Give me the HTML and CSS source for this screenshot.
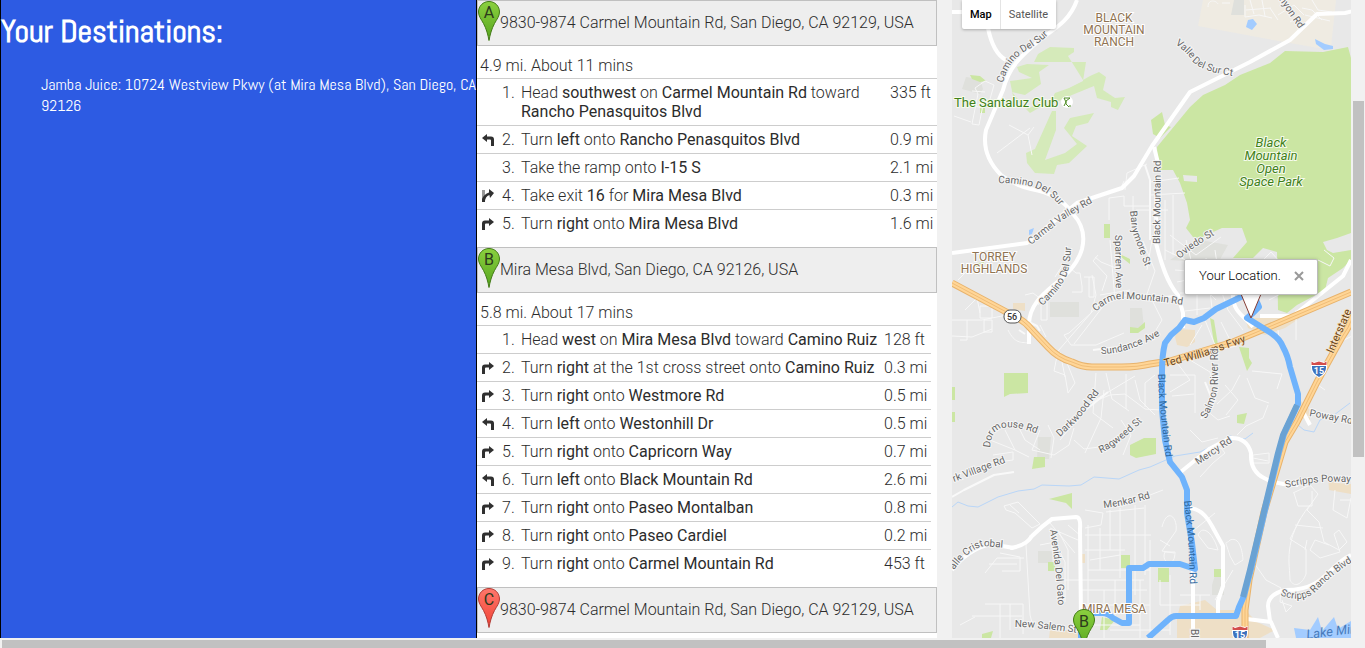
FILE: index.html
```html
<!DOCTYPE html>
<html lang="en">
<head>
<meta charset="utf-8">
<title>Your Destinations</title>
<link rel="stylesheet" href="styles.css">
</head>
<body>
<svg class="defs" aria-hidden="true">
  <defs>
    <linearGradient id="green" x2="0" y2="1"><stop offset="0" stop-color="#8bd03f"/><stop offset="1" stop-color="#56a51f"/></linearGradient>
    <linearGradient id="red" x2="0" y2="1"><stop offset="0" stop-color="#ff776b"/><stop offset="1" stop-color="#f04335"/></linearGradient>
    <symbol id="pin" viewBox="0 0 22 40"><path d="M11 .5C5 .5.5 5.200.5 11c0 4 2.500 7 5 11.500C8.500 28 10 34 11 39.500 12 34 13.500 28 16.500 22.500 19 18 21.500 15 21.500 11 21.500 5.200 17 .5 11 .5z"/></symbol>
    <symbol id="right" viewBox="0 0 14 14"><path fill="#303030" d="M1 13V6.500Q1 3.500 4 3.500H8V1l5 4-5 4V6.500H5Q4 6.500 4 7.500V13z"/></symbol>
    <symbol id="left" viewBox="0 0 14 14"><path fill="#303030" d="M13 13V6.500Q13 3.500 10 3.500H6V1L1 5l5 4V6.500h3q1 0 1 1V13z"/></symbol>
    <symbol id="ramp" viewBox="0 0 14 14"><path fill="#999" d="M1 1h3v12H1z"/><path fill="#303030" d="M1 13V10Q3 5 8 3.500V0l5 4-4 5-.6-3Q4 7.500 4 13z"/></symbol>
    <symbol id="shield" viewBox="0 0 18 18"><path fill="#fff" d="M1 1l3 1 5-1 5 1 3-1v7q0 6-8 10Q1 14 1 8z"/><path fill="#3c73be" d="M2 6h14v2q0 5-7 9-7-4-7-9z"/><path fill="#d34d4b" d="M1.500 1.500L4 3l5-1.500L14 3l2.500-1.500V5h-15z"/></symbol>
  </defs>
</svg>
<div class="page">
  <main class="columns">
    <section class="destinations">
      <h1>Your Destinations:</h1>
      <ul><li>Jamba Juice: 10724 Westview Pkwy (at Mira Mesa Blvd), San Diego, CA 92126</li></ul>
    </section>

    <section class="directions">
      <div class="place"><svg class="pin green" viewBox="0 0 22 40"><use href="#pin"/><text x="11" y="17">A</text></svg><span>9830-9874 Carmel Mountain Rd, San Diego, CA 92129, USA</span></div>
      <p class="summary">4.9 mi. About 11 mins</p>
      <table class="steps">
        <tr><td class="turn"></td><td class="num">1.</td><td>Head <b>southwest</b> on <b>Carmel Mountain Rd</b> toward <b>Rancho Penasquitos Blvd</b></td><td class="dist">335 ft</td></tr>
        <tr><td class="turn"><svg><use href="#left"/></svg></td><td class="num">2.</td><td>Turn <b>left</b> onto <b>Rancho Penasquitos Blvd</b></td><td class="dist">0.9 mi</td></tr>
        <tr><td class="turn"></td><td class="num">3.</td><td>Take the ramp onto <b>I-15 S</b></td><td class="dist">2.1 mi</td></tr>
        <tr><td class="turn"><svg><use href="#ramp"/></svg></td><td class="num">4.</td><td>Take exit <b>16</b> for <b>Mira Mesa Blvd</b></td><td class="dist">0.3 mi</td></tr>
        <tr><td class="turn"><svg><use href="#right"/></svg></td><td class="num">5.</td><td>Turn <b>right</b> onto <b>Mira Mesa Blvd</b></td><td class="dist">1.6 mi</td></tr>
      </table>
      <div class="place"><svg class="pin green" viewBox="0 0 22 40"><use href="#pin"/><text x="11" y="17">B</text></svg><span>Mira Mesa Blvd, San Diego, CA 92126, USA</span></div>
      <p class="summary">5.8 mi. About 17 mins</p>
      <table class="steps inset">
        <tr><td class="turn"></td><td class="num">1.</td><td>Head <b>west</b> on <b>Mira Mesa Blvd</b> toward <b>Camino Ruiz</b></td><td class="dist">128 ft</td></tr>
        <tr><td class="turn"><svg><use href="#right"/></svg></td><td class="num">2.</td><td>Turn <b>right</b> at the 1st cross street onto <b>Camino Ruiz</b></td><td class="dist">0.3 mi</td></tr>
        <tr><td class="turn"><svg><use href="#right"/></svg></td><td class="num">3.</td><td>Turn <b>right</b> onto <b>Westmore Rd</b></td><td class="dist">0.5 mi</td></tr>
        <tr><td class="turn"><svg><use href="#left"/></svg></td><td class="num">4.</td><td>Turn <b>left</b> onto <b>Westonhill Dr</b></td><td class="dist">0.5 mi</td></tr>
        <tr><td class="turn"><svg><use href="#right"/></svg></td><td class="num">5.</td><td>Turn <b>right</b> onto <b>Capricorn Way</b></td><td class="dist">0.7 mi</td></tr>
        <tr><td class="turn"><svg><use href="#left"/></svg></td><td class="num">6.</td><td>Turn <b>left</b> onto <b>Black Mountain Rd</b></td><td class="dist">2.6 mi</td></tr>
        <tr><td class="turn"><svg><use href="#right"/></svg></td><td class="num">7.</td><td>Turn <b>right</b> onto <b>Paseo Montalban</b></td><td class="dist">0.8 mi</td></tr>
        <tr><td class="turn"><svg><use href="#right"/></svg></td><td class="num">8.</td><td>Turn <b>right</b> onto <b>Paseo Cardiel</b></td><td class="dist">0.2 mi</td></tr>
        <tr><td class="turn"><svg><use href="#right"/></svg></td><td class="num">9.</td><td>Turn <b>right</b> onto <b>Carmel Mountain Rd</b></td><td class="dist">453 ft</td></tr>
      </table>
      <div class="place"><svg class="pin red" viewBox="0 0 22 40"><use href="#pin"/><text x="11" y="17">C</text></svg><span>9830-9874 Carmel Mountain Rd, San Diego, CA 92129, USA</span></div>
    </section>

    <section class="map" aria-label="Route map">
      <svg class="canvas" viewBox="952 0 399 638" preserveAspectRatio="xMidYMin slice">
        <!-- parks, water and built-up areas -->
        <g class="area">
          <path class="urban" d="M1203 0h133l-5 47-13 1-45-8-75-14z"/>
          <path class="grey" d="M1234 0h10v15h-13zM1050 302h29v15h-29zM1130 308h12l2 20-14 5zM1038 437h13l-2 22h-12zM1038 551h14v12h-14zM966 77l14 2 3 10-3 5-18-5zM1215 575l9-5v25h-12v-10zM1170 260l30-20 28 5-10 18z"/>
          <path class="shops" d="M1175 337l3-8 17 1v12l-8 5-10-2zM1245 318h55l-15 10-20 7-17-7zM1013 303h12v8l-12-2zM1180 606l25-6 12 10v28h-40v-20zM1217 610h28l12 12 18 8-15 8h-43zM1050 630h35v8h-36zM1328 475l8 8 15 1v10l-22-4zM1300 400l10 10v12l-10-5zM1079 554h6v9h-6z"/>
          <path class="park" d="M1157 147L1190 107 1203 95 1225 85 1240 75 1270 63 1285 51 1323 52 1348 47 1351 58V233L1337 238 1323 242 1327 250 1333 253 1351 250V260L1343 268 1328 278 1325 290 1297 305 1287 313 1278 310 1277 252 1263 248 1253 258H1233L1247 242 1242 228 1222 228 1200 238 1193 237 1186 228 1190 220 1187 203 1180 183 1173 170H1158z"/>
          <path class="park" d="M1151 120l11-8 3 13 6 2-11 11-7-4zM970 75l10 1 6 5-6 1-8-3zM980 108h5v5h-5zM1104 224h6v14h-6zM1120 254l10 5v5l-9-7zM1130 327l8 1 7-6v6l-7 5h-8zM1004 373h24v20l-18 1-6 3zM952 387h3v13h-3zM952 412h3v10h-3zM1034 457h11v10l-13 2zM1049 499l23-6v16l-6-6zM1130 445l14-7h12v16l-20 4-6-3zM1121 555h9v13h-9zM1048 562h7v9h-7zM1102 617l13 3-8 10h-7zM982 634l11-3-2 7h-9zM1158 568h11v14h-11zM1214 569h10v8h-10zM1239 347l10 1v10l3 5-5 8zM1237 415l10-2-3 11-7-1zM975 264l9-2-1 8h-7zM1210 318l4 2 4 25-4-2z"/>
          <path class="golf" d="M1034 62l4-8 12-7 24 1v4l-6 4 15 24 7-4 9-4 7 5-3 13 12 8 10-1-7 13-7-3v-5l-14-4-3-12-22 9-15 7-13 3-14 8-17-17-3-15 22-3-13-6-2-5 10-3 22 1-10 7 2 12-16 11-13-3 14 17 13-5 9 3 7-14 14-5 14-7 3-19z"/>
          <path class="golf" d="M1052 111h4v19l-11 30 20-7 12-9-13-16 6-10 24-5-6 10-12 3-4 10 15 10-18 17-12 2-3 9-19-1-8-10-1-10 9-4z"/>
          <path class="clearing" d="M1183 175l14 1v6l-13-1z"/>
          <path class="water" d="M1248 20l5-1 4 5-5 6-6-3zM1315 39l10 5 8 2v3l-9 1-8-6zM1029 230l5-2-2 6-3 1zM1294 628l16 2 8-13 4 14 12-14 4 12 13-8v17h-55z"/>
        </g>
        <path class="stream" d="M952 507l6-5 10 4 10 1 20-10 20-6 16-2 8-4 27 1 12-1 13-8 25 2 20-9 11-3 25-11 25-4 20-10 10-6 15 3 8-6M1283 430l15-5 6 5 10 2 6-12 14-5 16-12"/>
        <!-- residential streets -->
        <g class="street">
          <path d="M954 116l17 6M975 88l10-7 9 4-4 14-7 6-4 20-7-1 6-30zM972 91l13 1M972 105l10 3M997 153l33-25M1009 125l19 10 6-8M1028 135l4 20M1165 200v60M1173 195v60M1150 195l35-2M1151 182l28-4M1125 190l2-17 20-9M1133 220v-24M1109 220v-22l15-2v10h25M1136 210h32M1120 190l4-9M1110 240l5 60M1130 290l-30 5M1143 241l12 30-8 23-25 5M1095 257l6 5 20 8M1098 255l-5 6 14 15-5 15M1082 286l-2-13h-4l-12-10-9 14M1082 286v6h-10M1084 277h10v20h-5v-20M1092 275l4 20-5 18-22 20-5 2 7 10h25l28-12M1098 305l-40 46-4 20 11 4 3 18 7-10-8-20M1108 300l-34 44M1060 352l5 25"/>
          <path d="M952 320h30l30-6M952 336l20 1 20-8M965 310l12-12 3 15M980 306h12v12h-12zM984 320h8v12h-8zM960 340h7v-20M958 280l16-16M1025 295l8-2 8 6-3 6M1043 295h4v25h-6v-20M1040 325l6 12M1008 330c7 14 13 12 20 13"/>
          <path d="M1096 373l-3 40 20 15M1106 373l6 26 17 12M1126 374v35M1135 380l5 20 15 15M1095 400l40-24M1155 375l-10 8v24M1060 440l30-37 20-8 15-1 20 15 15 1M1121 420l10 15-8 20M1085 453l16-35 3-28M1074 440l10 9 15-2M1015 420l10 20 15 10M990 440l25 10 14 7M993 455l20-3v8l-30 4M1040 430l-8 20 22 5 15-10 5-17M1005 430l10 20M1048 425l6 13-3 20"/>
          <path d="M1004 506l14-4 22 22-8 4-17-15-9-3zM1010 505l9 8M1030 535l-4 10 4 70 4 15M1000 553l20 4v14h-18M985 573l12-15h27M989 564h28M960 625l15-8M972 616h50M1000 604v34M1010 604v26M985 604h38v30M1040 545l15-3 10 20v40M1058 530l10 20v40M1050 523l25 30M1078 540l-28-12M1068 525l13 11M1064 580h80M1082 590h65M1080 605h70M1070 625h70M1088 525v113M1100 528v42M1110 510v40M1120 508v70M1085 510l18 3-2 12-16 3M1135 505v90M1145 505v70M1106 512l38-4M1085 535h66M1085 550h40M1090 560l30-5M1104 590v48M1115 580v40M1140 580v58M1150 540v98M1110 630h60M1088 570h62"/>
          <path d="M1152 240l-5 30M1165 250l27 13M1170 235l26 20 25-18M1186 240l10 40 20 20M1175 270l38 3M1177 282l40-8M1180 293h53M1197 265v50M1206 258l6 50M1215 250l6 40 7 20 15 20M1185 311l25-3M1205 320l12 30 20-4M1190 345l12-20M1221 322l10 20M1152 300l10 20-6 10M1263 260l8-8 9 10 4 30-15 8M1175 360l15 20-20 12M1170 375h25v38M1172 396l22-2M1190 360l20 12 6 30M1240 375l-8 15-15 14M1252 371l30 3-5 15M1247 378l8 20 14 5M1225 385l13 15-12 15M1237 435l9-9 17-8 5-13M1190 430l12 12 16-4M1206 410l12 10 12-4M1278 330l2 16M1296 310v30M1325 390l-10-7 13-17 4-20 20-10M1324 250l10 8-4 8-12-6M1310 268l-13-6"/>
          <path d="M1245 5v12l14-2 13 3M1246 10l25-2M1250 0l4 14M1262 0l3 16M1270 8l8 12M1278 15l16-10 10 10M1302 8l10 2 10 10M1305 15l25 6M1312 0l6 10 14 2M1290 22l10-6M1208 7c0-9 9-6 10-3M1222 3h8"/>
          <path d="M1150 495l13-5M1162 527c5-20 16-10 14 4l-14 20 12 2M1165 552c-5 10 10 18 10 0zM1160 540l10 6M1198 535c5-12 16 0 20 15l-10-2zM1215 513l-22 18M1200 477l13-14 12-10-4-5-18 5M1230 556c-6-20-5-10 0-16 12-5 13 20 13 20l-8 5zM1253 455l16-2v10h-16zM1253 458l15 3M1294 493l4 13h14v-15M1310 505c-28 35-20 60-20 75 4 8 12 5 16-6v-25l-16-10 10-20M1293 493l17-8 8 9-11 16 12 12 5 20 15 8 8-8-8-12-5 4 6 18-20 6-10-8 5-10 14 5M1295 525l28 3M1307 540l-2 10M1252 560l14 20 15 8-1 14 12 4-6 6-4-12M1335 490l-2 20 14 8 4-20M1340 500h10M1200 595v15M1160 580v25h40M1170 575v60M1215 600l18-30M1180 595h30"/>
        </g>
        <g class="roadmain">
          <path d="M1077 0c-7 20-21 28-35 38-20 17-33 28-39 52l-17 40q-5 25 15 45 13 10 30 14 29 5 42 25 14 15 9 35c-10 35-52 40-53 75v20M988 28q5 25 18 32M952 12h10M952 253l75-10 50-40 45-15 12-12 18-30 38-54 60-30 40-22 27-26 28-1q15-3 20-10"/>
          <path d="M1154 147l5 20M1156 195v48c5 20 11 40 22 52l5 18v15M1260 316h33l50-40 8-16M1302 410l8 15M1233 295c0 17 10 20 20 32M1177 475l32-26 21-11q17-1 21 15-1 18 13 25 13 7 34 7M1190 508q13 1 22 18l11 20v40l-5 15v15M1193 570v68M1247 619l24 3 7 16M1270 621l-2-15q0-12 18-16c40 0 42-25 65-35M1010 548q16-2 22-12 10-10 20-17l24-2q5 0 4 12l1 90M952 570q15-20 38-26l24 4"/>
        </g>
        <path class="feeder" d="M952 497l12-7 30-15 20-3M1083 412l25-20M1145 165l5 15v60M1205 382l8 20-12 17M1103 300c12-10 50 0 70-4M1093 350l50-6M1019 330l6 4M1029 322l8 4 3 5"/>
        <!-- freeways -->
        <path class="casing" d="M952 283l60 32q12 5 20 15l16 17q10 11 24 15 10 5 20 5h30q16 0 28-3l20-3 63-19 24-10 94-40"/>
        <path class="freeway" d="M952 283l60 32q12 5 20 15l16 17q10 11 24 15 10 5 20 5h30q16 0 28-3l20-3 63-19 24-10 94-40"/>
        <path class="median" d="M952 283l60 32q12 5 20 15l16 17q10 11 24 15 10 5 20 5h30q16 0 28-3l20-3 63-19 24-10 94-40"/>
        <path class="casing" d="M1360 292q-5 27-18 45l-25 45-20 40-12 20-21 70-15 68-4 30v30"/>
        <path class="freeway" d="M1360 292q-5 27-18 45l-25 45-20 40-12 20-21 70-15 68-4 30v30"/>
        <path class="median" d="M1360 292q-5 27-18 45l-25 45-20 40-12 20-21 70-15 68-4 30v30"/>
        <path class="route" d="M1081 638v-24l11-1h10q6 0 11 5l9 5h7v-55h14l6-4h31l15 5-3-26-5-30v-23l-5-13-12-15-5-22-3-30v-38q0-17 3-29l6-8 8-7 6-8 9 2 10-4 12-9 27-13 8-8 8 19-6 6-6 5 24 15q9 6 12 14 5 9 7 20l8 27v10l-14 30-5 18-13 54-15 63-7 27-5 11-3 9h-60q-4 0-8 4l-20 18"/>
        <path class="routeshade" d="M1297 405l-14 30-5 18-13 54-15 63-7 27"/>
        <!-- road names -->
        <defs>
          <path id="l1" d="M1003 83q5-22 24-33 14-7 28-22"/><path id="l2" d="M998 183q22 0 38 5 15 5 27 22"/>
          <path id="l3" d="M1031 245l33-26 35-20"/><path id="l4" d="M1042 306q22-19 26-35 3-10 4-40"/>
          <path id="l5" d="M1175 44q13 9 17 17 8 10 40 15"/><path id="l6" d="M1276-5l30 44"/>
          <path id="l7" d="M1096 312q14-14 28-13 20 0 60 6"/><path id="l8" d="M1101 354q28 0 65-22"/>
          <path id="l9" d="M1160 244l1-94"/><path id="l10" d="M1130 211l2 20 16 43"/>
          <path id="l11" d="M1115 235l1 60"/><path id="l12" d="M1180 259q12-12 42-28"/>
          <path id="l13" d="M1165 367l35-9 60-21"/><path id="l14" d="M1206 419q10-17 12-34v-45"/>
          <path id="l15" d="M1158 374l1 25 8 70"/><path id="l16" d="M1060 437l18-17 25-32"/>
          <path id="l17" d="M990 448q1-18 13-20 12-3 38 7"/><path id="l18" d="M1101 453q18-8 49-39"/>
          <path id="l19" d="M1198 465l42-28"/><path id="l20" d="M1309 416l60 11"/>
          <path id="l21" d="M954 482l66-25"/><path id="l22" d="M954 570q14-20 30-24l32 3"/>
          <path id="l23" d="M1050 530l5 34 4 50"/><path id="l24" d="M1104 508q22-2 53-12"/>
          <path id="l25" d="M1184 501l4 35 3 70"/><path id="l26" d="M1286 488q35-10 80-4"/>
          <path id="l27" d="M1280 595q25 10 38-6 19-19 46-34"/><path id="l28" d="M1015 627q22 0 70 7"/>
          <path id="l29" d="M1333 354l32-74"/><path id="l30" d="M1191 629v40"/>
        </defs>
        <g class="label">
          <text><textPath href="#l1">Camino Del Sur</textPath></text><text><textPath href="#l2">Camino Del Sur</textPath></text>
          <text><textPath href="#l3">Carmel Valley Rd</textPath></text><text><textPath href="#l4">Camino Del Sur</textPath></text>
          <text><textPath href="#l5">Valle Del Sur Ct</textPath></text><text><textPath href="#l6">anyon Rd</textPath></text>
          <text><textPath href="#l7">Carmel Mountain Rd</textPath></text><text><textPath href="#l8">Sundance Ave</textPath></text>
          <text><textPath href="#l9">Black Mountain Rd</textPath></text><text><textPath href="#l10">Barrymore St</textPath></text>
          <text><textPath href="#l11">Sparren Ave</textPath></text><text><textPath href="#l12">Oviedo St</textPath></text>
          <text class="fwy"><textPath href="#l13">Ted Williams Fwy</textPath></text><text><textPath href="#l14">Salmon River Rd</textPath></text>
          <text class="onroute"><textPath href="#l15">Black Mountain Rd</textPath></text><text><textPath href="#l16">Darkwood Rd</textPath></text>
          <text><textPath href="#l17">Dormouse Rd</textPath></text><text><textPath href="#l18">Ragweed St</textPath></text>
          <text><textPath href="#l19">Mercy Rd</textPath></text><text><textPath href="#l20">Poway Rd</textPath></text>
          <text><textPath href="#l21">rk Village Rd</textPath></text><text><textPath href="#l22">alle Cristobal</textPath></text>
          <text><textPath href="#l23">Avenida Del Gato</textPath></text><text><textPath href="#l24">Menkar Rd</textPath></text>
          <text class="onroute"><textPath href="#l25">Black Mountain Rd</textPath></text><text><textPath href="#l26">Scripps Poway</textPath></text>
          <text><textPath href="#l27">Scripps Ranch Blvd</textPath></text><text><textPath href="#l28">New Salem St</textPath></text>
          <text class="fwy"><textPath href="#l29">Interstate</textPath></text><text><textPath href="#l30">Bl</textPath></text>
        </g>
        <g class="area-name">
          <text x="1114" y="22">BLACK</text><text x="1114" y="34">MOUNTAIN</text><text x="1114" y="46">RANCH</text>
          <text x="994" y="261">TORREY</text><text x="994" y="273">HIGHLANDS</text><text x="1114" y="613">MIRA MESA</text>
        </g>
        <g class="park-name">
          <text x="1271" y="147">Black</text><text x="1271" y="160">Mountain</text><text x="1271" y="173">Open</text><text x="1271" y="186">Space Park</text>
        </g>
        <text class="club" x="954" y="107">The Santaluz Club</text>
        <circle cx="1067" cy="102" r="6" fill="#fff"/><path d="M1064 98h6l-4 3v3l3 3M1064 98l2 4-2 4M1069 106h2" fill="none" stroke="#4d8b24"/>
        <text class="lake" x="1307" y="639" transform="rotate(-7 1307 639)">Lake Miramar</text>
        <rect x="1004" y="310" width="17" height="13" rx="6" fill="#fff" stroke="#555"/><text class="shield-no" x="1012" y="320">56</text>
        <use href="#shield" x="1310" y="360" width="18" height="18"/><text class="shield-no white" x="1319" y="374">15</text>
        <use href="#shield" x="1231" y="625" width="18" height="18"/><text class="shield-no white" x="1240" y="638">15</text>
        <path d="M1241 294l10 24 10-24z" fill="#fff" stroke="#863e36"/>
        <g class="pin green"><use href="#pin" x="1073" y="609" width="22" height="40"/><text x="1084" y="627">B</text></g>
      </svg>
      <div class="maptype"><button class="active">Map</button><button>Satellite</button></div>
      <div class="info"><span>Your Location.</span><button aria-label="Close"><svg viewBox="0 0 10 10"><path d="M1 1l8 8M9 1L1 9"/></svg></button></div>
    </section>
    <div class="vtrack"><div class="vthumb"></div></div>
  </main>
  <div class="htrack"><div class="hthumb"></div></div>
</div>
</body>
</html>
```
FILE: styles.css
```css
* { box-sizing: border-box; }
body { margin: 0; background: #f1f1f1; }
.defs { position: absolute; width: 0; height: 0; }
.page { height: 100vh; display: flex; flex-direction: column; overflow: hidden; }
.columns { flex: 1; min-height: 0; display: grid; grid-template-columns: 477fr 460fr 15px 399fr 14px; }

.destinations { background: #2d5be3; color: #fff; border: solid #000; border-width: 0 1px; font-family: "Abel", "Liberation Sans Narrow", "Liberation Sans", sans-serif; }
.destinations h1 { margin: 11px 0 0; font-size: 32px; line-height: 40px; }
.destinations ul { margin: 23px 0 0; padding-left: 40px; list-style: none; font-size: 16px; line-height: 21px; }

.directions { background: #fff; color: #2c2c2c; font: 300 16px/19px Roboto, sans-serif; overflow: hidden; }
.directions b { font-weight: 400; }
.place { display: flex; align-items: center; height: 46px; border: 1px solid #c0c0c0; background: #eee; }
.place .pin { flex: none; width: 22px; height: 40px; align-self: flex-start; }
.place span { padding-bottom: 2px; }
.pin text { font: 16px Roboto, sans-serif; text-anchor: middle; fill: #2c3a1c; stroke: none; }
.pin.green { fill: url(#green); stroke: #437b17; }
.pin.red { fill: url(#red); stroke: #b23b35; }
.summary { margin: 10px 0 3px; padding-left: 3px; }
.steps { width: 100%; margin-bottom: 10px; border-collapse: separate; border-spacing: 0; }
.steps.inset { width: calc(100% - 6px); }
.steps td { padding: 4px 3px; border-top: 1px solid #cdcdcd; vertical-align: top; }
.steps .turn { width: 22px; padding-left: 4px; }
.turn svg { display: block; width: 14px; height: 14px; margin-top: 3px; }
.steps .num { width: 19px; white-space: nowrap; }
.steps .dist { width: 50px; white-space: nowrap; }

.map { grid-column: 4; position: relative; overflow: hidden; background: #e8e8e8; font-family: Roboto, sans-serif; }
.canvas { display: block; width: 100%; height: 100%; }
.park { fill: #cbe6a3; }
.golf { fill: #d5eaba; }
.urban { fill: #efebe2; }
.shops { fill: #eedfc6; }
.grey { fill: #dfe0dc; }
.clearing { fill: #e8e8e8; }
.water { fill: #a3ccff; }
.stream, .street, .roadmain, .feeder, .casing, .freeway, .median, .route, .routeshade { fill: none; stroke-linejoin: round; }
.stream { stroke: #b9d6f8; }
.street { stroke: #f7f7f7; }
.feeder { stroke: #f9f9f9; stroke-width: 2; }
.roadmain { stroke: #fff; stroke-width: 4; }
.casing { stroke: #e8b36c; stroke-width: 7; }
.freeway { stroke: #ffd596; stroke-width: 5; }
.median { stroke: #efbd78; }
.route { stroke: #6fb3fc; stroke-width: 6; }
.routeshade { stroke: #6aa2d3; stroke-width: 6; }
.label text { font-size: 10px; fill: #666; stroke: #f5f5f5; stroke-width: 2px; paint-order: stroke; }
.label .onroute { fill: #2d679f; stroke: none; }
.label .fwy { font-size: 11px; fill: #694520; stroke: #ffe2b5; stroke-width: 1px; }
.area-name text { font-size: 12px; fill: #8f7352; text-anchor: middle; stroke: #fff; stroke-width: 2px; paint-order: stroke; }
.park-name text, .club { font-size: 13px; fill: #3f8018; stroke: #f5fbec; stroke-width: 2px; paint-order: stroke; }
.park-name text { font-style: italic; text-anchor: middle; }
.lake { font-size: 13px; font-style: italic; fill: #477bbb; }
.shield-no { font-size: 9px; font-weight: 500; text-anchor: middle; fill: #333; }
.shield-no.white { fill: #fff; font-weight: 700; }
.maptype { position: absolute; left: 10px; top: 0; display: flex; height: 29px; background: #fff; border-radius: 0 0 2px 2px; box-shadow: 0 1px 3px #0004; }
.maptype button { border: 0; padding: 0 8px; background: none; font: 11px Roboto, sans-serif; color: #565656; }
.maptype button + button { border-left: 1px solid #e4e4e4; }
.maptype .active { color: #000; font-weight: 500; }
.info { position: absolute; left: 232px; top: 259px; width: 134px; height: 36px; display: flex; align-items: center; justify-content: space-between; padding: 0 13px 3px 14px; background: #fff; border: 1px solid #bbb; border-radius: 2px; box-shadow: 0 1px 4px #0004; font-size: 13px; font-weight: 300; color: #000; }
.info button { border: 0; padding: 0; background: none; display: flex; }
.info svg { width: 10px; height: 10px; fill: none; stroke: #999; stroke-width: 2; }

.vtrack { padding: 101px 1px 0 2px; }
.vthumb { height: 356px; background: #c1c1c1; }
.htrack { height: 10px; padding: 2px 99px 0 2px; }
.hthumb { height: 8px; background: #c1c1c1; }
```
